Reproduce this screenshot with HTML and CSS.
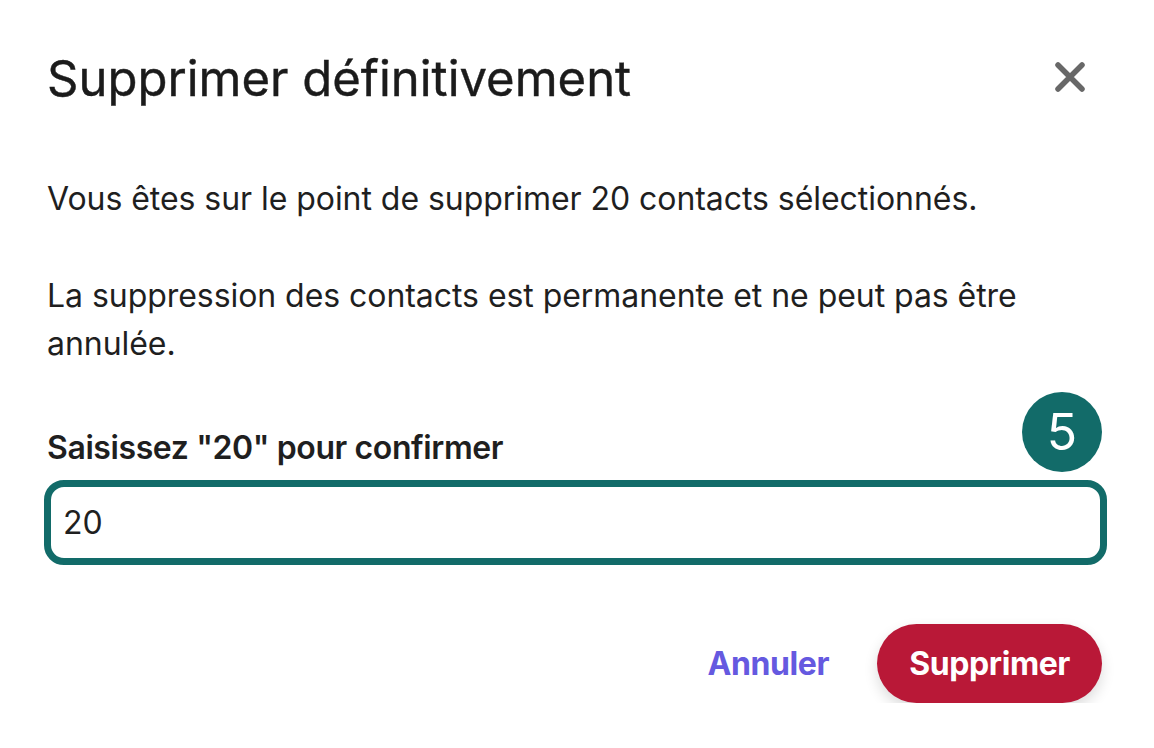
FILE: index.html
```html
<!DOCTYPE html>
<html lang="fr">
<head>
<meta charset="utf-8">
<title>Supprimer définitivement</title>
<link rel="stylesheet" href="styles.css">
</head>
<body>
<div class="dialog">
  <div class="header">
    <h1 class="title">Supprimer définitivement</h1>
    <button class="close" aria-label="Fermer">
      <svg width="30" height="30" viewBox="0 0 30 30"><path d="M3 3 L27 27 M27 3 L3 27" stroke="#686868" stroke-width="5.5" stroke-linecap="round" fill="none"/></svg>
    </button>
  </div>
  <p class="text first">Vous êtes sur le point de supprimer 20 contacts sélectionnés.</p>
  <p class="text second">La suppression des contacts est permanente et ne peut pas être annulée.</p>
  <div class="field">
    <label class="label" for="confirm">Saisissez "20" pour confirmer</label>
    <input class="input" id="confirm" type="text" value="20">
    <span class="badge">5</span>
  </div>
  <div class="actions">
    <button class="cancel">Annuler</button>
    <button class="danger">Supprimer</button>
  </div>
</div>
</body>
</html>
```
FILE: styles.css
```css
html, body {
  margin: 0;
  padding: 0;
  background: #ffffff;
}
body {
  font-family: Inter, "Noto Sans", sans-serif;
  color: #1f1f1f;
}
.dialog {
  padding: 50px 50px 0 47px;
  display: flex;
  flex-direction: column;
}
.header {
  display: flex;
  align-items: center;
  justify-content: space-between;
}
.title {
  margin: 0;
  font-size: 49px;
  font-weight: 400;
  line-height: 58px;
  letter-spacing: 0px;
  color: #1b1b1b;
  -webkit-text-stroke: 0.4px #1b1b1b;
}
.close {
  width: 48px;
  height: 48px;
  margin-right: 10px;
  margin-top: -4px;
  border: 0;
  padding: 0;
  background: transparent;
  display: flex;
  align-items: center;
  justify-content: center;
}
.text {
  margin: 0;
  font-size: 32px;
  line-height: 48px;
  letter-spacing: -0.05px;
}
.first {
  margin-top: 67px;
}
.second {
  margin-top: 49px;
}
.field {
  position: relative;
  margin-top: 56px;
  display: flex;
  flex-direction: column;
  gap: 8px;
}
.label {
  font-size: 32px;
  font-weight: 600;
  line-height: 48px;
  letter-spacing: -0.4px;
}
.input {
  margin: 0 -3px;
  height: 85px;
  box-sizing: border-box;
  border: 7px solid #126b69;
  border-radius: 20px;
  padding: 0 12px;
  font-family: Inter, "Noto Sans", sans-serif;
  font-size: 32px;
  color: #1f1f1f;
  outline: none;
  background: #fff;
}
.badge {
  position: absolute;
  right: 2px;
  top: -32px;
  width: 80px;
  height: 80px;
  border-radius: 50%;
  background: #126b69;
  color: #ffffff;
  font-size: 50px;
  line-height: 80px;
  text-align: center;
}
.actions {
  margin-top: 59px;
  display: flex;
  justify-content: flex-end;
  align-items: center;
  gap: 48px;
  margin-right: 2px;
}
.cancel {
  border: 0;
  background: transparent;
  padding: 0;
  font-family: Inter, "Noto Sans", sans-serif;
  font-size: 32px;
  font-weight: 700;
  letter-spacing: -0.4px;
  color: #6559e0;
}
.danger {
  height: 79px;
  padding: 0 32px;
  border: 0;
  border-radius: 40px;
  background: #b91837;
  color: #ffffff;
  font-family: Inter, "Noto Sans", sans-serif;
  font-size: 32px;
  font-weight: 700;
  letter-spacing: -0.4px;
  box-shadow: 0 6px 14px rgba(0, 0, 0, 0.14);
}
```
